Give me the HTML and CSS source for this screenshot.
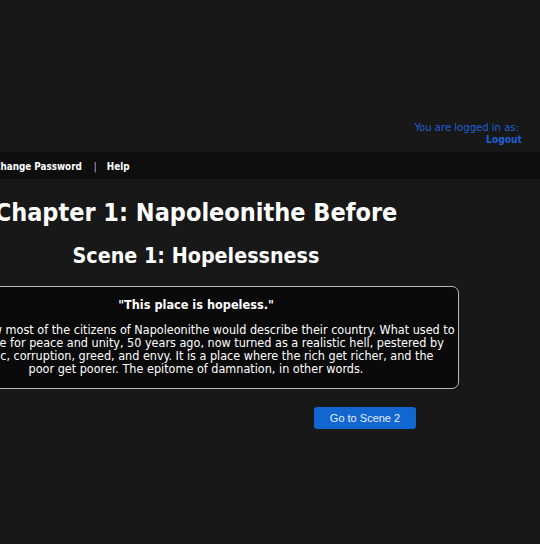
FILE: index.html
```html
<!DOCTYPE html>
<html>
<head>
<meta charset="utf-8">
<link rel="stylesheet" href="styles.css">
</head>
<body>
<header class="header">
  <div class="login">
    <div class="login-text">You are logged in as: </div>
    <a class="logout" href="#">Logout</a>
  </div>
</header>
<nav class="nav">
  <div class="nav-inner">
    <a href="#" class="nav-link">Change Password</a>
    <span class="sep">|</span>
    <a href="#" class="nav-link">Help</a>
  </div>
</nav>
<main class="page">
  <h1 class="chapter">Chapter 1: Napoleonithe Before</h1>
  <h2 class="scene">Scene 1: Hopelessness</h2>
  <div class="story">
    <p class="quote">"This place is hopeless."</p>
    <p class="text">That is how most of the citizens of Napoleonithe would describe their country. What used to<br>be a place for peace and unity, 50 years ago, now turned as a realistic hell, pestered by<br>anarchic, corruption, greed, and envy. It is a place where the rich get richer, and the<br>poor get poorer. The epitome of damnation, in other words.</p>
  </div>
  <div class="actions">
    <button class="next">Go to Scene 2</button>
  </div>
</main>
</body>
</html>
```
FILE: styles.css
```css
html, body {
  margin: 0;
  padding: 0;
  background: #181818;
  overflow: hidden;
}
body {
  font-family: "DejaVu Sans Condensed", "DejaVu Sans", sans-serif;
  color: #fff;
  width: 540px;
  height: 544px;
}
.header {
  height: 152px;
  display: flex;
  justify-content: flex-end;
  align-items: flex-end;
  box-sizing: border-box;
  padding: 0 18px 6px 0;
}
.login {
  text-align: right;
  font-size: 11.2px;
  line-height: 12px;
  color: #1f5fd6;
}
.login-text {
  padding-right: 3px;
}
.logout {
  color: #1f5fd6;
  font-weight: bold;
  font-size: 10.2px;
  text-decoration: none;
}
.nav {
  height: 27px;
  background: #0e0e0e;
  display: flex;
  align-items: center;
  padding-top: 1px;
  box-sizing: border-box;
}
.nav-inner {
  margin-left: -6px;
  display: flex;
  align-items: center;
  font-size: 9.8px;
  font-weight: bold;
}
.nav-link {
  color: #fff;
  text-decoration: none;
}
.sep {
  font-weight: normal;
  color: #c8b8e8;
  margin: 0 10px 0 12px;
}
.page {
  width: 526px;
  margin-left: -67px;
  text-align: center;
}
.chapter {
  font-size: 25px;
  margin: 19px 0 0;
  line-height: 30px;
}
.scene {
  font-size: 21.3px;
  margin: 15px 0 0;
  line-height: 26px;
}
.story {
  margin-top: 17px;
  background: #0a0a0a;
  border: 1px solid #b8b8b8;
  border-radius: 7px;
  padding: 10px 0 13px;
}
.quote {
  margin: 0;
  font-weight: bold;
  font-size: 12.6px;
  line-height: 15px;
}
.text {
  margin: 11px 0 0;
  font-size: 12.5px;
  line-height: 13px;
  white-space: nowrap;
}
.actions {
  margin-top: 18px;
  padding-left: 381px;
  text-align: left;
}
.next {
  width: 102px;
  height: 22px;
  background: #1166d0;
  color: #e8eefc;
  border: none;
  border-radius: 3px;
  font-family: "Liberation Sans", sans-serif;
  font-size: 11px;
}
```
